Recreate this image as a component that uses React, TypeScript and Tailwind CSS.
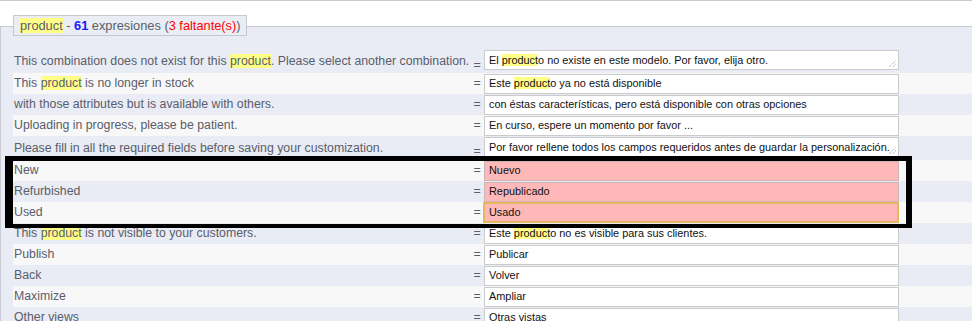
import React from "react";

const HL = ({ children }: { children: React.ReactNode }) => (
  <span className="bg-[#ffff88]">{children}</span>
);

type Row = {
  label: React.ReactNode;
  value: React.ReactNode;
  kind: "input" | "textarea" | "pink" | "pinkFocus";
  h: string;
  bg: string;
  mt?: string;
};

const rows: Row[] = [
  {
    label: (
      <>
        This combination does not exist for this <HL>product</HL>. Please select another combination.
      </>
    ),
    value: (
      <>
        El <HL>product</HL>o no existe en este modelo. Por favor, elija otro.
      </>
    ),
    kind: "textarea",
    h: "h-[23px]",
    bg: "bg-transparent",
    mt: "mt-0",
  },
  {
    label: (
      <>
        This <HL>product</HL> is no longer in stock
      </>
    ),
    value: (
      <>
        Este <HL>product</HL>o ya no está disponible
      </>
    ),
    kind: "input",
    h: "h-[21px]",
    bg: "bg-[#f8f8f8]",
  },
  {
    label: <>with those attributes but is available with others.</>,
    value: <>con éstas características, pero está disponible con otras opciones</>,
    kind: "input",
    h: "h-[21px]",
    bg: "bg-transparent",
  },
  {
    label: <>Uploading in progress, please be patient.</>,
    value: <>En curso, espere un momento por favor ...</>,
    kind: "input",
    h: "h-[21px]",
    bg: "bg-[#f8f8f8]",
  },
  {
    label: <>Please fill in all the required fields before saving your customization.</>,
    value: <>Por favor rellene todos los campos requeridos antes de guardar la personalización.</>,
    kind: "textarea",
    h: "h-[24px]",
    bg: "bg-transparent",
    mt: "mt-[1px]",
  },
  { label: <>New</>, value: <>Nuevo</>, kind: "pink", h: "h-[21px]", bg: "bg-[#f8f8f8]" },
  { label: <>Refurbished</>, value: <>Republicado</>, kind: "pink", h: "h-[21px]", bg: "bg-transparent" },
  { label: <>Used</>, value: <>Usado</>, kind: "pinkFocus", h: "h-[21px]", bg: "bg-[#f8f8f8]" },
  {
    label: (
      <>
        This <HL>product</HL> is not visible to your customers.
      </>
    ),
    value: (
      <>
        Este <HL>product</HL>o no es visible para sus clientes.
      </>
    ),
    kind: "input",
    h: "h-[21px]",
    bg: "bg-transparent",
  },
  { label: <>Publish</>, value: <>Publicar</>, kind: "input", h: "h-[21px]", bg: "bg-[#f8f8f8]" },
  { label: <>Back</>, value: <>Volver</>, kind: "input", h: "h-[21px]", bg: "bg-transparent" },
  { label: <>Maximize</>, value: <>Ampliar</>, kind: "input", h: "h-[21px]", bg: "bg-[#f8f8f8]" },
  { label: <>Other views</>, value: <>Otras vistas</>, kind: "input", h: "h-[21px]", bg: "bg-transparent" },
];

function Grip() {
  return (
    <svg
      className="absolute bottom-[2px] right-[2px]"
      width="8"
      height="8"
      viewBox="0 0 8 8"
    >
      <line x1="1" y1="8" x2="8" y2="1" stroke="#9a9a9a" strokeWidth="1" strokeDasharray="1 1" />
      <line x1="4.5" y1="8" x2="8" y2="4.5" stroke="#9a9a9a" strokeWidth="1" strokeDasharray="1 1" />
    </svg>
  );
}

function Value({ row }: { row: Row }) {
  if (row.kind === "textarea") {
    return (
      <div
        className={`relative ${row.mt ?? "mt-0"} flex h-[20px] w-full items-start overflow-hidden whitespace-nowrap border border-[#cbcbcb] bg-white pl-[4px] pt-[3px] text-[10.9px] leading-[13px] text-[#111]`}
      >
        <span>{row.value}</span>
        <Grip />
      </div>
    );
  }
  if (row.kind === "pink") {
    return (
      <div className="flex h-[20px] w-full items-center overflow-hidden whitespace-nowrap border border-[#cdb4b4] bg-[#ffb8b8] px-[4px] text-[10.9px] text-[#111]">
        <span>{row.value}</span>
      </div>
    );
  }
  if (row.kind === "pinkFocus") {
    return (
      <div className="-ml-[1px] flex h-[21px] w-[416px] items-center overflow-hidden whitespace-nowrap border-2 border-[#e6b85e] bg-[#ffb8b8] px-[4px] text-[10.9px] text-[#111]">
        <span>{row.value}</span>
      </div>
    );
  }
  return (
    <div className="flex h-[20px] w-full items-center overflow-hidden whitespace-nowrap border border-[#cbcbcb] bg-white px-[4px] text-[10.9px] text-[#111]">
      <span>{row.value}</span>
    </div>
  );
}

export default function App() {
  return (
    <div className="relative h-[321px] w-[972px] overflow-hidden bg-white font-['Liberation_Sans',Arial,sans-serif]">
      <div className="border-t border-[#c9cbd3]" />
      <div className="pt-[14px]">
        <div className="relative z-10 ml-[13px] flex h-[21px] w-[234px] items-center whitespace-nowrap border border-[#c6c8d1] bg-[#eaedf4] pl-[6px] text-[12.8px] text-[#5a5d6b]">
          <span>
            <HL>product</HL> - <b className="text-[#1a1aff]">61</b> expresiones (
            <span className="text-[#ff0000]">3 faltante(s)</span>)
          </span>
        </div>
        <div className="-mt-[10px] h-[320px] border-l border-t border-[#c9cbd3] bg-[#e9ecf4] pl-[12px] pt-[23px]">
          {rows.map((r, i) => (
            <div key={i} className={`flex ${r.h} ${r.bg}`}>
              <div className="flex w-[457px] shrink-0 items-center whitespace-nowrap pl-[1px] text-[12.3px] text-[#5a5d6b]">
                <span>{r.label}</span>
              </div>
              <div
                className={
                  r.kind === "textarea"
                    ? "flex w-[14px] shrink-0 items-start justify-center pt-[9px] text-[12.4px] leading-[12px] text-[#5a5d6b]"
                    : "flex w-[14px] shrink-0 items-center justify-center text-[12.4px] text-[#5a5d6b]"
                }
              >
                =
              </div>
              <div
                className={
                  r.kind === "textarea"
                    ? "flex w-[415px] shrink-0 items-start"
                    : "flex w-[415px] shrink-0 items-center"
                }
              >
                <Value row={r} />
              </div>
              <div className="flex-1" />
            </div>
          ))}
        </div>
      </div>
      <div className="absolute left-[5px] top-[156px] h-[72px] w-[907px] border-b-[4px] border-l-[8px] border-r-[6px] border-t-[5px] border-black" />
    </div>
  );
}
